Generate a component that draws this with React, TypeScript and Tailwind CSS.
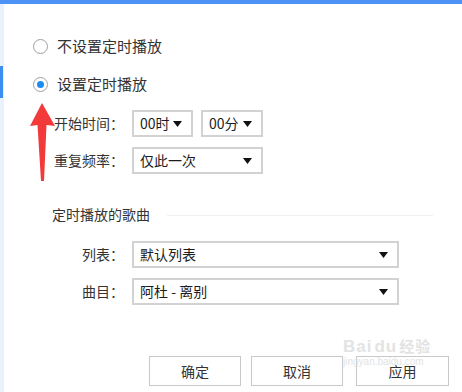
import { ReactNode } from 'react';

function Radio({ checked, label }: { checked?: boolean; label: string }) {
    return (
        <div className="flex h-[20px] items-center">
            <div className="flex h-[15px] w-[15px] items-center justify-center rounded-full border border-[#a0a0a0] bg-white">
                {checked && <div className="h-[7px] w-[7px] rounded-full bg-[#1d8cf2]" />}
            </div>
            <span className="ml-[9px] text-[15px] leading-[20px] text-[#333]">{label}</span>
        </div>
    );
}

function Caret() {
    return (
        <svg width="9" height="6" viewBox="0 0 9 6" className="shrink-0">
            <path d="M0 0 H9 L4.5 6 Z" fill="#111" />
        </svg>
    );
}

function Select({ value, className }: { value: string; className: string }) {
    return (
        <div
            className={`flex h-[27px] items-center justify-between border-2 border-[#d2d2d2] bg-white pr-[9px] pl-[6px] ${className}`}
        >
            <span className="text-[14px] text-[#1c1c1c]">{value}</span>
            <Caret />
        </div>
    );
}

function Row({ label, children, className }: { label: string; children: ReactNode; className: string }) {
    return (
        <div className={`flex items-center ${className}`}>
            <div className="w-[91px] text-right text-[14px] text-[#333]">{label}</div>
            <div className="ml-[8px] flex gap-[8px]">{children}</div>
        </div>
    );
}

export default function App() {
    return (
        <div
            className="relative h-[392px] w-[462px] overflow-hidden bg-white"
            style={{ fontFamily: '"Noto Sans CJK SC", "Noto Sans", sans-serif' }}
        >
            {/* 顶部蓝条 */}
            <div className="h-[4px] bg-[#4d92f7]" />

            <div className="flex h-[388px]">
                {/* 左侧栏 */}
                <div className="w-[4px] bg-[#e9f2fc]">
                    <div className="mt-[62px] h-[32px] w-[3px] bg-[#3b8ef0]" />
                </div>

                {/* 主内容 */}
                <div className="flex-1 pt-[32px] pl-[29px]">
                    <Radio label="不设置定时播放" />
                    <div className="mt-[18px]">
                        <Radio checked label="设置定时播放" />
                    </div>

                    <Row label="开始时间：" className="mt-[16px]">
                        <Select value="00时" className="w-[61px]" />
                        <Select value="00分" className="w-[62px]" />
                    </Row>
                    <Row label="重复频率：" className="mt-[10px]">
                        <Select value="仅此一次" className="w-[131px]" />
                    </Row>

                    {/* 定时播放的歌曲 */}
                    <div className="mt-[30px] flex items-center pl-[19px]">
                        <span className="text-[14px] leading-[20px] text-[#333]">定时播放的歌曲</span>
                        <div className="mt-[3px] ml-[17px] h-px w-[266px] bg-[#efefef]" />
                    </div>

                    <Row label="列表：" className="mt-[17px]">
                        <Select value="默认列表" className="w-[267px]" />
                    </Row>
                    <Row label="曲目：" className="mt-[10px]">
                        <Select value="阿杜 - 离别" className="w-[267px]" />
                    </Row>

                    {/* 按钮 */}
                    <div className="mt-[51px] flex gap-[10px] pl-[116px]">
                        <button className="h-[30px] w-[92px] border border-[#c9c9c9] bg-white text-[14px] text-[#333]">
                            确定
                        </button>
                        <button className="h-[30px] w-[92px] border border-[#c9c9c9] bg-white text-[14px] text-[#333]">
                            取消
                        </button>
                        <button className="ml-[3px] h-[30px] w-[93px] border border-[#c9c9c9] bg-white text-[14px] text-[#333]">
                            应用
                        </button>
                    </div>
                </div>
            </div>

            {/* 红色箭头 */}
            <svg className="absolute top-0 left-0" width="70" height="190" viewBox="0 0 70 190">
                <path d="M42 103 L55 126 L46.5 125 L44 181 L41 181 L37.5 125 L30 126 Z" fill="#f23a3a" />
            </svg>

            {/* 水印 */}
            <div className="pointer-events-none absolute top-[338px] left-[343px] leading-none text-[#e3e3e3]">
                <div className="text-[17px] font-bold tracking-[1px]" style={{ fontFamily: '"Liberation Sans", sans-serif' }}>
                    Bai<span className="ml-[2px]">du</span>
                    <span className="ml-[2px] text-[15px]" style={{ fontFamily: '"Noto Sans CJK SC", sans-serif' }}>经验</span>
                </div>
                <div className="mt-[2px] text-[10px]" style={{ fontFamily: '"Liberation Sans", sans-serif' }}>
                    jingyan.baidu.com
                </div>
            </div>
        </div>
    );
}
